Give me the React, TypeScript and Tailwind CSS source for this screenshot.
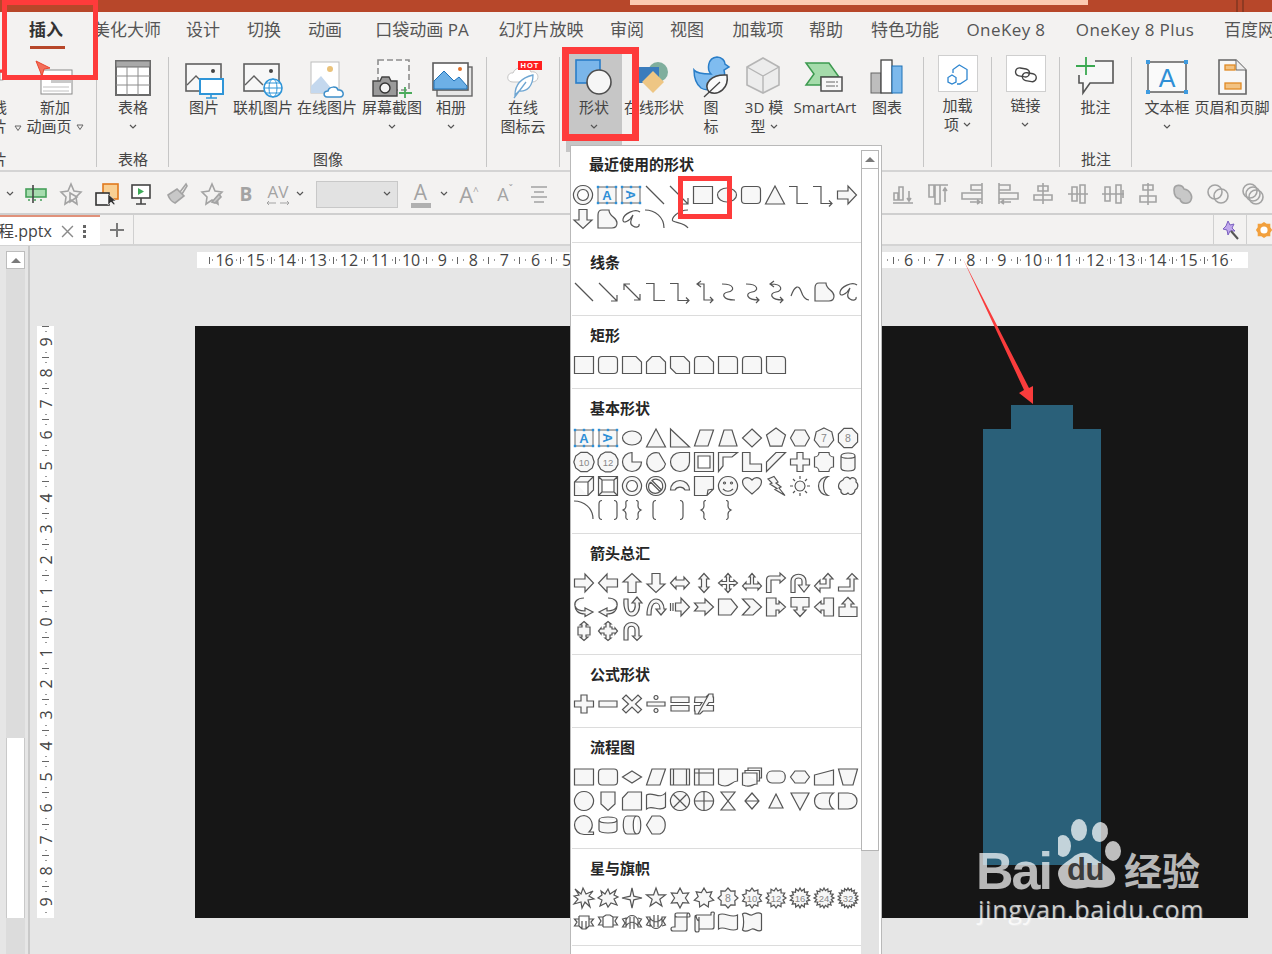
import { ReactNode } from "react";

const polar = (cx: number, cy: number, r: number, a: number) =>
  `${(cx + r * Math.cos((a * Math.PI) / 180)).toFixed(1)} ${(cy + r * Math.sin((a * Math.PI) / 180)).toFixed(1)}`;

const poly = (n: number, r = 9.5, rot = -90) => {
  const pts = [];
  for (let i = 0; i < n; i++) pts.push(polar(10, 10, r, rot + (i * 360) / n));
  return "M" + pts.join("L") + "Z";
};

const star = (n: number, r2: number, r1 = 10) => {
  const pts = [];
  for (let i = 0; i < n * 2; i++) pts.push(polar(10, 10, i % 2 ? r2 : r1, -90 + (i * 180) / n));
  return "M" + pts.join("L") + "Z";
};

const paths: Record<string, string> = {
  ring: "M10 .5a9.5 9.5 0 1 0 .01 0ZM10 4.5a5.5 5.5 0 1 0 .01 0Z",
  line: "M1 1L19 19",
  arrowLine: "M1 1L19 19M13 19h6v-6",
  dblArrow: "M2 2L18 18M2 8V2h6M12 18h6v-6",
  elbow: "M0 1.5H8V18.5H19",
  elbowArrow: "M0 1.5H8V18.5H19M16 15.5l3 3-3 3",
  elbowDbl: "M4 2H10V18H19M7 -1L3 2l4 3M16 15l3 3-3 3",
  curved: "M4 2C17 2 17 9 10 10S4 18 17 18",
  curvedArrow: "M4 2C17 2 17 9 10 10S4 18 17 18M14 15l3 3-3 3",
  curvedDbl: "M5 2C17 2 17 9 10 10S4 18 17 18M8 -1L4 2l4 3M14 15l3 3-3 3",
  curve: "M1 14C5 3 9 3 11 9S15 18 19 18",
  free: "M1 19V6Q1 1 5 1H12C12 8 20 8 20 14Q20 19 15 19Z",
  scribble: "M19 3C14 -1 3 5 2 10C1 16 9 12 12 6C10 11 8 15 12 17C15 19 19 18 18 15",
  arcLine: "M0 1C10 1 19 8 19 19",
  arcLine2: "M19 1C9 1 1 10 4 12C8 14 16 14 19 19",
  rect: "M.5 1.5H19.500V18.500H.5Z",
  roundRect: "M4 1.5H16Q19.500 1.500 19.500 5V15Q19.500 18.500 16 18.500H4Q.5 18.500 .5 15V5Q.5 1.500 4 1.500Z",
  snip1: "M.5 1.5H14L19.500 7V18.500H.5Z",
  snip2: "M6 1.5H14L19.500 7V18.500H.5V7Z",
  snipDiag: "M.5 1.5H14L19.500 7V18.500H6L.5 13Z",
  snipRound: "M4 1.5H14L19.500 7V18.500H.5V5Q.5 1.500 4 1.500Z",
  round1: "M.5 1.5H16Q19.500 1.500 19.500 5V18.500H.5Z",
  round2: "M4 1.5H16Q19.500 1.500 19.500 5V18.500H.5V5Q.5 1.500 4 1.500Z",
  roundDiag: "M.5 1.5H16Q19.500 1.500 19.500 5V18.500H4Q.5 18.500 .5 15Z",
  ellipse: "M10 3C15 3 19.500 6 19.500 10S15 17 10 17 .5 14 .5 10 5 3 10 3Z",
  tri: "M10 1L19.500 19H.5Z",
  rtTri: "M.5 1L19.500 19H.5Z",
  para: "M6 2H19.500L14 18H.5Z",
  trap: "M6 2H14L19 18H1Z",
  diamond: "M10 1L19.500 10 10 19 .5 10Z",
  penta: poly(5, 10),
  hexa: "M5 2H15L19.500 10 15 18H5L.5 10Z",
  hepta: poly(7, 10),
  octa: poly(8, 10.4, -67.5),
  deca: poly(10, 10.2, -72),
  dodeca: poly(12, 10.2, -75),
  pie: "M10 10V.5A9.5 9.5 0 1 0 19.500 10Z",
  chord: "M13 1A9.500 9.500 0 1 0 19.500 12Z",
  tear: "M10 .5A9.500 9.500 0 1 0 19.500 10V.5Z",
  frame: "M.5.5H19.500V19.500H.5ZM4 4V16H16V4Z",
  halfFrame: "M.5.5H19.500L14 5H5V14L.5 19.500Z",
  lShape: "M.5.5H8V12H19.500V19.500H.5Z",
  stripe: "M.5 19.500V10L10 .5H19.500Z",
  plus: "M7 .5H13V7H19.500V13H13V19.500H7V13H.5V7H7Z",
  plaque: "M5 .5H15A4.500 4.500 0 0 0 19.500 5V15A4.500 4.500 0 0 0 15 19.500H5A4.500 4.500 0 0 0 .5 15V5A4.500 4.500 0 0 0 5 .5Z",
  can: "M3 4C3 0 17 0 17 4V16C17 20 3 20 3 16ZM3 4C3 7 17 7 17 4",
  cube: "M.5 6L6 .5H19.500V14L14 19.500H.5ZM.5 6H14V19.500M14 6L19.500 .5",
  bevel: "M.5.5H19.500V19.500H.5ZM4 4H16V16H4ZM.5.5L4 4M19.500 .5L16 4M.5 19.500L4 16M19.500 19.500L16 16",
  donut: "M10 .5a9.500 9.500 0 1 0 .01 0ZM10 4.500a5.500 5.500 0 1 0 .01 0Z",
  noSym: "M10 .5a9.500 9.500 0 1 0 .01 0ZM4.500 6L14 15.500A6 6 0 0 0 6 4.500L15.500 14M4.500 6A6 6 0 0 0 14 15.500",
  arch: "M.5 14A9.500 9.500 0 0 1 19.500 14L15 14A5.500 5 0 0 0 5 14Z",
  fold: "M.5.5H19.500V13L13 19.500H.5ZM13 19.500L14 14 19.500 13",
  smile: "M10 .5a9.500 9.500 0 1 0 .01 0ZM6.500 6a1 1 0 1 0 .01 0ZM13.500 6a1 1 0 1 0 .01 0ZM5 13C8 16 12 16 15 13",
  heart: "M10 18C4 13 .5 10 .5 6 .5 2 6 -.5 10 4 14 -.5 19.500 2 19.500 6 19.500 10 16 13 10 18Z",
  bolt: "M2 3L8 .5 12 6 10 7 15 11 13 12 19 19.500 9 13.500 11 12.500 4 8 6 7Z",
  sun: "M10 5a5 5 0 1 0 .01 0ZM10 0V3M10 17V20M0 10H3M17 10H20M3 3L5 5M15 15L17 17M17 3L15 5M5 15L3 17",
  moon: "M14 .5A9.500 9.500 0 1 0 14 19.500C8 16 8 4 14 .5Z",
  cloud: "M5 4C6 1 10 0 12 3 15 0 19 3 18 6 21 8 20 13 17 14 17 18 12 20 10 17 7 20 2 18 3 14 -1 12 0 6 5 4Z",
  arc: "M0 1C10 1 19 8 19 19",
  brackets: "M4 .5Q1 .5 1 4V16Q1 19.500 4 19.500M16 .5Q19 .5 19 4V16Q19 19.500 16 19.500",
  braces: "M6 .5C3 .5 4 3 4 6S3 9 1 10C3 11 4 12 4 14S3 19.500 6 19.500M14 .5C17 .5 16 3 16 6S17 9 19 10C17 11 16 12 16 14S17 19.500 14 19.500",
  lBr: "M10 .5Q7 .5 7 4V16Q7 19.500 10 19.500",
  rBr: "M10 .5Q13 .5 13 4V16Q13 19.500 10 19.500",
  lBc: "M12 .5C9 .5 10 3 10 6S9 9 7 10C9 11 10 12 10 14S9 19.500 12 19.500",
  rBc: "M8 .5C11 .5 10 3 10 6S11 9 13 10C11 11 10 12 10 14S11 19.500 8 19.500",
  aRight: "M.5 6H11V1L19.500 10 11 19V14H.5Z",
  aLeft: "M19.500 6H9V1L.5 10 9 19V14H19.500Z",
  aUp: "M6 19.500V9H1L10 .5 19 9H14V19.500Z",
  aDown: "M6 .5V11H1L10 19.500 19 11H14V.5Z",
  aLR: "M.5 10L6 4V7H14V4L19.500 10 14 16V13H6V16Z",
  aUD: "M10 .5L15 6H12.500V14H15L10 19.500 5 14H7.500V6H5Z",
  aQuad: "M10 .5L13 4H11.500V8.500H16V7L19.500 10 16 13V11.500H11.500V16H13L10 19.500 7 16H8.500V11.500H4V13L.5 10 4 7V8.500H8.500V4H7Z",
  aLRU: "M10 .5L13 4H11.500V11H16V9L19.500 13 16 17V15H4V17L.5 13 4 9V11H8.500V4H7Z",
  aBent: "M.5 19.500V7Q.5 3 4 3H14V0L19.500 5 14 10V7H5V19.500Z",
  aU: "M1 19.500V8C1 -1 16 -1 16 8V12H19.500L14 19 8.500 12H12V8C12 4 5 4 5 8V19.500Z",
  aLU: "M14 .5L19 6H16V15H6V19L.5 13 6 7V11H12V6H9Z",
  aBentUp: "M.5 14H12V6H9L14 .5 19.500 6H16V18H.5Z",
  aCR: "M10 1C3 1 0 5 1 9 2 12 6 14 11 14V11L19 15 11 19.500V17C4 17 1 13 1 9",
  aCL: "M10 1C17 1 20 5 19 9 18 12 14 14 9 14V11L1 15 9 19.500V17C16 17 19 13 19 9",
  aCU: "M2 2C1 12 5 19 10 19S19 12 17 6H20L15 0 10 6H13C14 11 12 15 9 15S6 10 6 2Z",
  aCD: "M1 18C1 8 5 2 10 2S18 7 18 12H20L15 18 10 12H14C14 8 12 6 10 6S5 8 5 18Z",
  aStriped: "M.5 6V14M3 6V14M5.500 6H11V1L19.500 10 11 19V14H5.500Z",
  aNotch: "M.5 6H11V2L19.500 10 11 18V14H.5L4 10Z",
  home: "M.5 2H13L19.500 10 13 18H.5Z",
  chevron: "M.5 2H11L19.500 10 11 18H.5L8 10Z",
  cRight: "M.5 1H10V7H13V4L19.500 10 13 16V13H10V19H.5Z",
  cDown: "M1 .5H19V10H13V13H16L10 19.500 4 13H7V10H1Z",
  cLeft: "M19.500 1H10V7H7V4L.5 10 7 16V13H10V19H19.500Z",
  cUp: "M1 19.500H19V10H13V7H16L10 .5 4 7H7V10H1Z",
  cUD: "M10 .5L14 4H12V6H16V14H12V16H14L10 19.500 6 16H8V14H4V6H8V4H6Z",
  cQuad: "M10 .5L13 3H12V6H14V8H17V7L19.500 10 17 13V12H14V14H12V17H13L10 19.500 7 17H8V14H6V12H3V13L.5 10 3 7V8H6V6H8V3H7Z",
  aCirc: "M2 19V9C2 -1 17 -1 17 9V15H19.500L15 19.500 10.500 15H13V9C13 4 6 4 6 9V19Z",
  eqPlus: "M7 1H13V7H19.500V13H13V19H7V13H.5V7H7Z",
  eqMinus: "M1 7H19V13H1Z",
  eqMul: "M4 1L10 7 16 1 19.500 4.500 13.500 10 19.500 15.500 16 19 10 13 4 19 .5 15.500 6.500 10 .5 4.500Z",
  eqDiv: "M1 8H19V12H1ZM10 1.500a2 2 0 1 0 .01 0ZM10 14.500a2 2 0 1 0 .01 0Z",
  eqEq: "M1 3H19V8.500H1ZM1 11.500H19V17H1Z",
  eqNe: "M1 3H12L15 0H19V3H19.500V8.500H15L13 11.500H19.500V17H9L6 20H1V17H.5V11.500H6L8 8.500H.5ZM15 0L4 20",
  fProc: "M.5 2H19.500V18H.5Z",
  fAlt: "M4 2H16Q19.500 2 19.500 5.500V14.500Q19.500 18 16 18H4Q.5 18 .5 14.500V5.500Q.5 2 4 2Z",
  fDec: "M10 4L19.500 10 10 16 .5 10Z",
  fData: "M6 2H19.500L14 18H.5Z",
  fPre: "M.5 2H19.500V18H.5ZM3.500 2V18M16.500 2V18",
  fInt: "M.5 2H19.500V18H.5ZM.5 6H19.500M5 2V18",
  fDoc: "M.5 2H19.500V14C14 14 13 19 7 19 4 19 2 18 .5 17Z",
  fMulti: "M.5 6H15V17C11 17 9 20 5 19 3 19 2 18 .5 18ZM3 6V3.500H17.500V14H15M6 3.500V1H19.500V11H17.500",
  fTerm: "M6 4H14C21 4 21 16 14 16H6C-1 16 -1 4 6 4Z",
  fPrep: "M5 4H15L19.500 10 15 16H5L.5 10Z",
  fManI: "M.5 8L19.500 3V18H.5Z",
  fManO: "M.5 2H19.500L15 18H5Z",
  fConn: "M10 .5a9.500 9.500 0 1 0 .01 0Z",
  fOff: "M3 1H17V13L10 19.500 3 13Z",
  fCard: "M6 1H19.500V19H.5V7Z",
  fTape: "M.5 4C6 0 14 9 19.500 2V16C14 22 6 13 .5 18Z",
  fSum: "M10 .5a9.500 9.500 0 1 0 .01 0ZM3.500 3.500L16.500 16.500M16.500 3.500L3.500 16.500",
  fOr: "M10 .5a9.500 9.500 0 1 0 .01 0ZM10 .5V19.500M.5 10H19.500",
  fColl: "M3 1H17L3 19H17Z",
  fSort: "M10 2L17 10 10 18 3 10ZM3 10H17",
  fExt: "M10 3L17 17H3Z",
  fMerge: "M1 2H19L10 19Z",
  fStored: "M19.500 2H8C-2 2 -2 18 8 18H19.500C14 14 14 6 19.500 2Z",
  fDelay: "M.5 2H10C22 2 22 18 10 18H.5Z",
  fSeq: "M10 .5A9.500 9.500 0 1 0 10 19.500H19.500V17H15A9.500 9.500 0 0 0 10 .5Z",
  fDisk: "M1 5C1 1 19 1 19 5V15C19 19 1 19 1 15ZM1 5C1 9 19 9 19 5",
  fDrum: "M5 1H15C20 1 20 19 15 19H5C0 19 0 1 5 1ZM15 1C10 1 10 19 15 19",
  fDisp: "M6 1H14C21 4 21 16 14 19H6L.5 10Z",
  exp1: "M1 1L7 6 9 0 12 6 19 3 15 8 20 11 14 12 16 19 11 14 8 20 7 14 0 16 4 11 0 8 5 7Z",
  exp2: "M3 3L7 6 10 1 12 6 18 2 16 7 20 9 16 11 19 17 13 15 10 19 8 15 2 18 4 12 0 10 4 7Z",
  s4: star(4, 2.5),
  s5: star(5, 4),
  s6: star(6, 5.4),
  s7: star(7, 6),
  s8: star(8, 7.4),
  s10: star(10, 7.2),
  s12: star(12, 7.2),
  s16: star(14, 7.2),
  s24: star(16, 7.4),
  s32: star(18, 7.6),
  rUp: "M5 4H15V14H19.500L17 10 19.500 7H15M5 7H.5L3 10 .5 14H5M5 4V14M15 4V14M5 14L8 17H12L15 14M8 9V17M12 9V17",
  rDn: "M5 15H15V5H19.500L17 9 19.500 13H15M5 13H.5L3 9 .5 5H5M5 15V5M15 15V5M5 5L8 3H12L15 5",
  rcUp: "M4 8C7 2 13 2 16 8V15H19.500L17 11 19.500 7 16 6M4 6L.5 7 3 11 .5 15H4ZM8 5V17M12 5V17M4 14C7 9 13 9 16 14",
  rcDn: "M4 12C7 18 13 18 16 12V5H19.500L17 9 19.500 13 16 14M4 14L.5 13 3 9 .5 5H4ZM8 15V3M12 15V3M4 6C7 11 13 11 16 6",
  scrollV: "M5 3Q5 1 7 1H19Q17 1 17 3V17Q17 19 15 19H3Q1 19 1 17Q1 15 3 15H5ZM5 3Q5 5 7 5H19Q21 5 19 1",
  scrollH: "M1 5Q1 3 3 3H17V1Q17 0 19 0T20 3V15Q20 17 18 17H5V19Q5 20 3 20T1 18ZM5 5V17M3 3Q1 3 3 7T5 5",
  wave: "M.5 3C6 -1 13 7 19.500 3V17C13 21 6 13 .5 17Z",
  wave2: "M.5 2C4 -1 7 4 10 3S16 -1 19.500 2V18C16 21 13 16 10 17S4 21 .5 18C2 14 2 6 .5 2Z",
};

const open = new Set(["line", "arrowLine", "dblArrow", "elbow", "elbowArrow", "elbowDbl", "curved", "curvedArrow", "curvedDbl", "curve", "scribble", "arcLine", "arcLine2", "arc", "brackets", "braces", "lBr", "rBr", "lBc", "rBc", "fSort"]);

const labels: Record<string, string> = { hepta: "7", octa: "8", deca: "10", dodeca: "12", s8: "8", s10: "10", s12: "12", s16: "16", s24: "24", s32: "32" };

const Shape = ({ name }: { name: string }) => {
  if (name === "tb" || name === "tbv") {
    const handles = [[1, 2], [10, 2], [19, 2], [1, 18], [10, 18], [19, 18]];
    return (
      <svg viewBox="0 0 20 20" className="w-5 h-5 overflow-visible">
        <rect x="1" y="2" width="18" height="16" fill="#f7f7f7" stroke="#666" />
        {handles.map(([x, y]) => (
          <rect key={`${x}-${y}`} x={x - 1.2} y={y - 1.2} width="2.4" height="2.4" fill="#2f8fd6" />
        ))}
        <text x="10" y="15" fontSize="13" fontWeight="700" textAnchor="middle" fill="#2f8fd6" transform={name === "tbv" ? "rotate(90 10 10)" : undefined} fontFamily="Liberation Sans">
          A
        </text>
      </svg>
    );
  }
  const isOpen = open.has(name);
  return (
    <svg viewBox="0 0 20 20" className="w-5 h-5 overflow-visible">
      <path d={paths[name]} fill={isOpen ? "none" : "#f7f7f7"} fillRule="evenodd" stroke="#555" strokeWidth="1.2" />
      {labels[name] && (
        <text x="10" y="13.5" fontSize={labels[name].length > 1 ? "9.5" : "10.5"} textAnchor="middle" fill="#888" fontFamily="Liberation Sans">
          {labels[name]}
        </text>
      )}
    </svg>
  );
};

const sections: { title: string; rows: string[][] }[] = [
  {
    title: "线条",
    rows: [["line", "arrowLine", "dblArrow", "elbow", "elbowArrow", "elbowDbl", "curved", "curvedArrow", "curvedDbl", "curve", "free", "scribble"]],
  },
  {
    title: "矩形",
    rows: [["rect", "roundRect", "snip1", "snip2", "snipDiag", "snipRound", "round1", "round2", "roundDiag"]],
  },
  {
    title: "基本形状",
    rows: [
      ["tb", "tbv", "ellipse", "tri", "rtTri", "para", "trap", "diamond", "penta", "hexa", "hepta", "octa"],
      ["deca", "dodeca", "pie", "chord", "tear", "frame", "halfFrame", "lShape", "stripe", "plus", "plaque", "can"],
      ["cube", "bevel", "donut", "noSym", "arch", "fold", "smile", "heart", "bolt", "sun", "moon", "cloud"],
      ["arc", "brackets", "braces", "lBr", "rBr", "lBc", "rBc"],
    ],
  },
  {
    title: "箭头总汇",
    rows: [
      ["aRight", "aLeft", "aUp", "aDown", "aLR", "aUD", "aQuad", "aLRU", "aBent", "aU", "aLU", "aBentUp"],
      ["aCR", "aCL", "aCU", "aCD", "aStriped", "aNotch", "home", "chevron", "cRight", "cDown", "cLeft", "cUp"],
      ["cUD", "cQuad", "aCirc"],
    ],
  },
  {
    title: "公式形状",
    rows: [["eqPlus", "eqMinus", "eqMul", "eqDiv", "eqEq", "eqNe"]],
  },
  {
    title: "流程图",
    rows: [
      ["fProc", "fAlt", "fDec", "fData", "fPre", "fInt", "fDoc", "fMulti", "fTerm", "fPrep", "fManI", "fManO"],
      ["fConn", "fOff", "fCard", "fTape", "fSum", "fOr", "fColl", "fSort", "fExt", "fMerge", "fStored", "fDelay"],
      ["fSeq", "fDisk", "fDrum", "fDisp"],
    ],
  },
  {
    title: "星与旗帜",
    rows: [
      ["exp1", "exp2", "s4", "s5", "s6", "s7", "s8", "s10", "s12", "s16", "s24", "s32"],
      ["rUp", "rDn", "rcUp", "rcDn", "scrollV", "scrollH", "wave", "wave2"],
    ],
  },
];

const recent = [
  ["ring", "tb", "tbv", "line", "arrowLine", "rect", "ellipse", "roundRect", "tri", "elbow", "elbowArrow", "aRight"],
  ["aDown", "free", "scribble", "arcLine", "arcLine2"],
];

const ShapeRows = ({ rows }: { rows: string[][] }) => (
  <div className="flex flex-col">
    {rows.map((row, i) => (
      <div key={i} className="flex h-6">
        {row.map((name, j) => (
          <div key={j} className="w-6 h-6 flex items-center justify-center">
            <Shape name={name} />
          </div>
        ))}
      </div>
    ))}
  </div>
);

const MenuTitle = ({ children }: { children: ReactNode }) => (
  <div className="h-5 pl-[18px] text-[15px] leading-5 font-bold text-[#262626]">{children}</div>
);

const ShapesMenu = () => (
  <div className="absolute left-[570px] top-[145px] w-[312px] bottom-0 bg-white border border-b-0 border-[#b9b9b9] flex overflow-hidden">
    <div className="w-[291px]">
      <div className="pt-2 pb-[11px]">
        <MenuTitle>最近使用的形状</MenuTitle>
        <div className="mt-[9px]">
          <ShapeRows rows={recent} />
        </div>
      </div>
      {sections.map((s) => (
        <div key={s.title} className="ml-px border-t border-[#dcdcdc] pt-[9px] pb-[11px]">
          <MenuTitle>{s.title}</MenuTitle>
          <div className="mt-2">
            <ShapeRows rows={s.rows} />
          </div>
        </div>
      ))}
      <div className="ml-px border-t border-[#dcdcdc]" />
    </div>
    <div className="w-[18px] mt-1 flex flex-col">
      <div className="h-[19px] bg-white border border-[#b5b5b5] flex items-center justify-center">
        <div className="w-0 h-0 border-x-[5px] border-x-transparent border-b-[5px] border-b-[#7a7a7a]" />
      </div>
      <div className="h-[682px] bg-white border-x border-b border-[#b5b5b5]" />
      <div className="flex-1 bg-[#e3e3e3]" />
    </div>
    <div className="w-[2px]" />
  </div>
);

const tabs: [string, string][] = [
  ["插入", "w-[60px] ml-4 font-bold text-[#333]"],
  ["美化大师", "w-[102px]"],
  ["设计", "w-[50px]"],
  ["切换", "w-[72px]"],
  ["动画", "w-[50px]"],
  ["口袋动画 PA", "w-[144px]"],
  ["幻灯片放映", "w-[94px]"],
  ["审阅", "w-[78px]"],
  ["视图", "w-[42px]"],
  ["加载项", "w-[100px]"],
  ["帮助", "w-[36px]"],
  ["特色功能", "w-[122px]"],
  ["OneKey 8", "w-[80px] tracking-[.4px]"],
  ["OneKey 8 Plus", "w-[178px] tracking-[.4px]"],
];

const Chevron = ({ className = "" }: { className?: string }) => (
  <svg viewBox="0 0 8 6" className={`w-2 h-1.5 ${className}`}>
    <path d="M1 1l3 3 3-3" fill="none" stroke="#555" strokeWidth="1.2" />
  </svg>
);

const Tri = ({ className = "ml-1" }: { className?: string }) => (
  <svg viewBox="0 0 8 6" className={`w-2 h-1.5 inline-block ${className}`}>
    <path d="M1 1h6L4 5.500Z" fill="none" stroke="#666" />
  </svg>
);

const Icon = ({ children }: { children: ReactNode }) => (
  <svg viewBox="0 0 48 48" className="w-12 h-12 shrink-0 overflow-visible">
    {children}
  </svg>
);

const SlideIco = () => (
  <Icon>
    <rect x="10" y="20" width="31" height="24" fill="#fff" stroke="#8a8a8a" />
    <rect x="20" y="26" width="20" height="7" fill="#c9c9c9" />
    <path d="M12 37h26M12 41h26" stroke="#c0c0c0" />
    <path d="M5 11l14 7-6 1-2 7Z" fill="#f36f5a" stroke="#e9452f" />
  </Icon>
);

const TableIco = () => (
  <Icon>
    <rect x="7" y="11" width="34" height="34" fill="#fff" stroke="#6b6b6b" strokeWidth="2" />
    <rect x="7" y="11" width="34" height="6" fill="#a9a9a9" stroke="#6b6b6b" />
    <path d="M18 17V45M29 17V45M7 26H41M7 35H41" stroke="#8c8c8c" />
  </Icon>
);

const Mountain = ({ x = 0, y = 0 }: { x?: number; y?: number }) => (
  <g transform={`translate(${x} ${y})`}>
    <rect x="0" y="0" width="35" height="27" fill="#f7f7f7" stroke="#5f5f5f" strokeWidth="1.6" />
    <path d="M1 21L10 12 19 21" fill="none" stroke="#5f5f5f" strokeWidth="1.4" />
    <circle cx="27" cy="7" r="2" fill="#444" />
  </g>
);

const PicIco = () => (
  <Icon>
    <Mountain x={6} y={14} />
    <rect x="20" y="29" width="23" height="15" fill="#fff" stroke="#2e95d8" strokeWidth="2" />
    <path d="M31 44V48M26 48H37" stroke="#2e95d8" strokeWidth="1.6" />
  </Icon>
);

const OnlinePicIco = () => (
  <Icon>
    <Mountain x={5} y={14} />
    <circle cx="34" cy="38" r="9" fill="#fff" stroke="#2e95d8" strokeWidth="1.6" />
    <ellipse cx="34" cy="38" rx="4" ry="9" fill="none" stroke="#2e95d8" />
    <path d="M25 38H43M27 33H41M27 43H41" stroke="#2e95d8" />
  </Icon>
);

const CloudPicIco = () => (
  <Icon>
    <rect x="8" y="12" width="28" height="31" fill="#fff" stroke="#bdbdbd" />
    <circle cx="27" cy="19" r="3" fill="#eac27a" />
    <path d="M8 43V36L18 26 28 38 33 43Z" fill="#c4d8ee" />
    <path d="M24 47C20 47 20 41 25 41 26 36 34 36 35 40 41 39 42 47 37 47Z" fill="#fff" stroke="#3d8fca" strokeWidth="1.5" />
  </Icon>
);

const ShotIco = () => (
  <Icon>
    <rect x="10" y="10" width="31" height="30" fill="#f7f7f7" stroke="#8d8d8d" strokeDasharray="6 3" strokeWidth="1.6" />
    <path d="M5 31H12L14 27H21L23 31H29V46H5Z" fill="#9a9a9a" stroke="#444" strokeWidth="1.4" />
    <circle cx="17" cy="38" r="5" fill="#f4f4f4" stroke="#333" strokeWidth="1.4" />
    <path d="M37 37V48M31 43H44" stroke="#4bab5c" strokeWidth="1.8" />
  </Icon>
);

const AlbumIco = () => (
  <Icon>
    <rect x="10" y="17" width="35" height="29" fill="#e6e6e6" stroke="#666" strokeWidth="1.4" />
    <rect x="6" y="13" width="35" height="27" fill="#fff" stroke="#5c5c5c" strokeWidth="1.6" />
    <path d="M7 39V31L17 21 27 31 32 27 40 36V39Z" fill="#6db0e6" stroke="#1f72b8" />
    <circle cx="33" cy="19" r="2" fill="#e2722a" />
  </Icon>
);

const CloudIconIco = () => (
  <Icon>
    <path d="M14 32C6 32 8 22 14 23 16 16 30 15 32 22 40 20 42 32 33 32Z" fill="#fff" stroke="#c5c5c5" />
    <rect x="19" y="11" width="24" height="9" fill="#ff1f1f" />
    <text x="31" y="18" fontSize="7.5" fontWeight="700" textAnchor="middle" fill="#fff" letterSpacing="1" fontFamily="Liberation Sans">
      HOT
    </text>
    <path d="M16 45C16 34 22 28 34 25 34 36 28 42 20 41ZM15 48L27 32" fill="#fff" stroke="#6fa6d2" strokeWidth="1.3" />
  </Icon>
);

const ShapesIco = () => (
  <Icon>
    <rect x="6" y="10" width="24" height="23" fill="#7ab6ea" stroke="#2a7ec8" strokeWidth="1.6" />
    <circle cx="29" cy="32" r="12" fill="#f6f6f6" stroke="#4e4e4e" strokeWidth="1.6" />
  </Icon>
);

const OnlineShapesIco = () => (
  <Icon>
    <circle cx="28" cy="22" r="10" fill="#7fae9d" />
    <path d="M9 17H29V33H9Z" fill="#3b7cbc" />
    <path d="M23 21L34 32 23 43 12 32Z" fill="#eec684" />
  </Icon>
);

const DuckIco = () => (
  <Icon>
    <path d="M7 20C10 24 20 24 24 24C20 20 20 8 30 7C35 7 38 11 38 14L42 17 37 20C38 24 38 28 36 30C34 38 20 42 14 38C9 34 7 26 7 20Z" fill="#7fbcf0" stroke="#2a7ec8" strokeWidth="1.5" />
    <path d="M22 42C16 34 24 24 40 25 42 38 32 46 22 42Z" fill="#fafafa" stroke="#444" strokeWidth="1.5" />
    <path d="M17 47L33 32" stroke="#444" strokeWidth="1.3" />
  </Icon>
);

const CubeIco = () => (
  <Icon>
    <path d="M23 8L39 17V35L23 43 7 35V17Z" fill="#ececec" stroke="#b5b5b5" strokeWidth="1.6" />
    <path d="M7 17L23 26 39 17M23 26V43" fill="none" stroke="#b5b5b5" strokeWidth="1.4" />
  </Icon>
);

const SmartIco = () => (
  <Icon>
    <path d="M5 13H28L38 27H20V35H5L13 24Z" fill="#a5dcab" stroke="#3d9a50" strokeWidth="1.5" />
    <rect x="20" y="27" width="21" height="14" fill="#f7f7f7" stroke="#4e4e4e" strokeWidth="1.5" />
    <path d="M25 32H37M25 36H37" stroke="#666" strokeDasharray="9 1" />
  </Icon>
);

const ChartIco = () => (
  <Icon>
    <rect x="8" y="23" width="10" height="20" fill="#bdbdbd" stroke="#666" />
    <rect x="18" y="10" width="11" height="33" fill="#fff" stroke="#444" strokeWidth="1.3" />
    <rect x="29" y="16" width="10" height="27" fill="#7cb9ec" stroke="#1f72b8" />
  </Icon>
);

const AddinIco = () => (
  <div className="w-10 h-[37px] mt-[5px] bg-white border border-[#cfcfcf] flex items-center justify-center">
    <svg viewBox="0 0 24 24" className="w-6 h-6">
      <path d="M7 11V7.500L13.300 3 21 7.500V17.500L14 22H11" fill="none" stroke="#2e86d0" strokeWidth="1.3" />
      <path d="M6 13L10 15.500V20L6 22 2 20V15.500Z" fill="none" stroke="#2e86d0" strokeWidth="1.3" />
    </svg>
  </div>
);

const LinkIco = () => (
  <div className="w-10 h-[37px] mt-[5px] bg-white border border-[#cfcfcf] flex items-center justify-center">
    <svg viewBox="0 0 24 24" className="w-6 h-6">
      <rect x="1.500" y="6.500" width="14" height="8" rx="4" transform="rotate(10 8.700 10.500)" fill="none" stroke="#444" strokeWidth="1.4" />
      <rect x="8.300" y="11.200" width="14" height="8" rx="4" transform="rotate(10 15.300 15.200)" fill="none" stroke="#444" strokeWidth="1.4" />
    </svg>
  </div>
);

const CommentIco = () => (
  <Icon>
    <path d="M23 11H41V33H18L11 43V33H7V25" fill="#f7f7f7" stroke="#555" strokeWidth="1.6" />
    <path d="M14 7V25M4 16H23" stroke="#3aa850" strokeWidth="1.8" />
  </Icon>
);

const TextboxIco = () => (
  <Icon>
    <rect x="5" y="12" width="38" height="30" fill="#fafafa" stroke="#555" strokeWidth="1.4" />
    {[[5, 12], [43, 12], [5, 42], [43, 42]].map(([x, y]) => (
      <rect key={`${x}${y}`} x={x - 2} y={y - 2} width="4" height="4" fill="#3f9be0" />
    ))}
    <text x="24" y="37" fontSize="25" textAnchor="middle" fill="#2f8fd6" fontFamily="Liberation Sans">
      A
    </text>
  </Icon>
);

const HeaderIco = () => (
  <Icon>
    <path d="M11 10H28L38 20V44H11Z" fill="#f7f7f7" stroke="#666" strokeWidth="1.6" />
    <path d="M28 10V20H38" fill="#eee" stroke="#666" />
    <rect x="17" y="15" width="10" height="5" fill="#f2c282" stroke="#e08a25" strokeWidth="1.3" />
    <rect x="17" y="33" width="16" height="6" fill="#f2c282" stroke="#e08a25" strokeWidth="1.3" />
  </Icon>
);

const Item = ({ width, icon, lines, active = false, top }: { width: string; icon: ReactNode; lines: ReactNode[]; active?: boolean; top?: string }) => (
  <div className={`${width} shrink-0 flex flex-col items-center ${active ? "bg-[#c6c6c6] h-[102px]" : ""}`}>
    <div className="h-[48px] flex justify-center w-12">{icon}</div>
    <div className={`flex flex-col items-center whitespace-nowrap text-[15px] leading-[19px] text-[#444] ${top ?? ""}`}>
      {lines.map((l, i) => (
        <div key={i} className="h-[19px] flex items-center">
          {l}
        </div>
      ))}
    </div>
  </div>
);

const Group = ({ width, label, children, pad = "" }: { width: string; label?: string; children: ReactNode; pad?: string }) => (
  <div className={`${width} shrink-0 h-full flex flex-col relative`}>
    <div className={`flex ${pad}`}>{children}</div>
    {label && <div className="absolute left-0 right-0 top-[99px] text-center text-[15px] leading-5 text-[#444]">{label}</div>}
    <div className="absolute right-0 top-[7px] h-[110px] w-px bg-[#c6c6c6]" />
  </div>
);

const Ribbon = () => (
  <div className="h-[124px] flex pt-0.5 border-b-2 border-[#d4d4d4] bg-[#f3f2f1] overflow-hidden">
    <Group width="w-[97px]" pad="-ml-[8px]">
      <div className="w-[30px] shrink-0 flex flex-col items-start pt-[48px] text-[15px] leading-[19px] text-[#444] whitespace-nowrap relative">
        <div>线</div>
        <div>
          片
          <Tri className="ml-[7px]" />
        </div>
        <div className="absolute left-0 top-[99px] leading-5 text-left">片</div>
        <svg viewBox="0 0 16 16" className="absolute left-[8px] top-[12px] w-3 h-6">
          <rect x="0" y="6" width="4" height="10" fill="#fff" stroke="#888" />
          <rect x="0" y="2" width="6" height="4" fill="#f33" />
        </svg>
      </div>
      <Item
        width="w-[66px]"
        icon={<SlideIco />}
        lines={[
          "新加",
          <>
            动画页
            <Tri />
          </>,
        ]}
      />
    </Group>
    <Group width="w-[72px]" label="表格">
      <Item width="w-[72px]" icon={<TableIco />} lines={["表格", <Chevron />]} />
    </Group>
    <Group width="w-[318px]" label="图像" pad="pl-[5px]">
      <Item width="w-[60px]" icon={<PicIco />} lines={["图片"]} />
      <Item width="w-[58px]" icon={<OnlinePicIco />} lines={["联机图片"]} />
      <Item width="w-[70px]" icon={<CloudPicIco />} lines={["在线图片"]} />
      <Item width="w-[60px]" icon={<ShotIco />} lines={["屏幕截图", <Chevron />]} />
      <Item width="w-[58px]" icon={<AlbumIco />} lines={["相册", <Chevron />]} />
    </Group>
    <Group width="w-[73px]">
      <Item width="w-[72px]" icon={<CloudIconIco />} lines={["在线", "图标云"]} />
    </Group>
    <Group width="w-[364px]" pad="pl-[6px]">
      <Item width="w-[56px]" active icon={<ShapesIco />} lines={["形状", <Chevron />]} />
      <Item width="w-[64px]" icon={<OnlineShapesIco />} lines={["在线形状"]} />
      <Item width="w-[50px]" icon={<DuckIco />} lines={["图", "标"]} />
      <Item
        width="w-[56px]"
        icon={<CubeIco />}
        lines={[
          "3D 模",
          <>
            型<Chevron className="ml-1" />
          </>,
        ]}
      />
      <Item width="w-[66px]" icon={<SmartIco />} lines={["SmartArt"]} />
      <Item width="w-[58px]" icon={<ChartIco />} lines={["图表"]} />
    </Group>
    <Group width="w-[68px]">
      <Item
        width="w-[67px]"
        icon={<AddinIco />}
        top="-mt-[2px]"
        lines={[
          "加载",
          <>
            项<Chevron className="ml-1" />
          </>,
        ]}
      />
    </Group>
    <Group width="w-[68px]">
      <Item width="w-[67px]" icon={<LinkIco />} top="-mt-[2px]" lines={["链接", <Chevron />]} />
    </Group>
    <Group width="w-[72px]" label="批注">
      <Item width="w-[71px]" icon={<CommentIco />} lines={["批注"]} />
    </Group>
    <div className="flex-1 flex">
      <Item width="w-[70px]" icon={<TextboxIco />} lines={["文本框", <Chevron />]} />
      <Item width="w-[60px]" icon={<HeaderIco />} lines={["页眉和页脚"]} />
    </div>
  </div>
);

const Tool = ({ w = "w-[35px]", children }: { w?: string; children: ReactNode }) => (
  <div className={`${w} shrink-0 flex items-center justify-center`}>{children}</div>
);

const G = ({ children }: { children: ReactNode }) => (
  <svg viewBox="0 0 24 24" className="w-6 h-6 overflow-visible" fill="none" stroke="#a3a3a3" strokeWidth="1.6">
    {children}
  </svg>
);

const starPath = "M12 2L15 9 22 10 17 15 18 22 12 18 6 22 7 15 2 10 9 9Z";

const Toolbar = () => (
  <div className="h-[43px] flex items-center pt-[3px] bg-[#f3f2f1] border-b-2 border-[#cfcfcf]">
    <Tool w="w-5">
      <Chevron />
    </Tool>
    <Tool w="w-8">
      <G>
        <rect x="2" y="7" width="20" height="8" fill="#a6dcae" stroke="#46a05a" />
        <path d="M9 3V21" stroke="#444" />
        <path d="M4 18H20" stroke="#46a05a" strokeDasharray="2 4" />
      </G>
    </Tool>
    <Tool w="w-[38px]">
      <G>
        <path d={starPath} />
        <path d="M11 11V20L18 15Z" />
      </G>
    </Tool>
    <Tool w="w-[34px]">
      <G>
        <rect x="8" y="2" width="15" height="15" fill="#f8cf93" stroke="#e0791d" />
        <rect x="1" y="11" width="13" height="12" fill="#f5f5f5" stroke="#333" />
        <path d="M13 12V23L16 20 19 23 20 22 18 19H21Z" fill="#333" stroke="#fff" strokeWidth=".5" />
      </G>
    </Tool>
    <Tool w="w-[34px]">
      <G>
        <rect x="3" y="3" width="18" height="13" fill="#fff" stroke="#444" />
        <path d="M12 16V22M7 22H17" stroke="#444" />
        <path d="M9 6L15 9.500 9 13Z" fill="#3eaa58" stroke="none" />
      </G>
    </Tool>
    <Tool w="w-[37px]">
      <G>
        <path d="M3 13L12 7 19 14 10 21C7 20 4 16 3 13Z" fill="#c8c8c8" />
        <path d="M15 10L21 2 22 4 17 12" />
      </G>
    </Tool>
    <Tool w="w-[34px]">
      <G>
        <path d={starPath} />
        <path d="M12 20L19 12 21 15 15 21Z" fill="#c8c8c8" />
      </G>
    </Tool>
    <Tool w="w-[34px]">
      <span className="text-[19px] font-bold text-[#a3a3a3]">B</span>
    </Tool>
    <Tool w="w-[30px]">
      <div className="flex flex-col items-center leading-none">
        <span className="text-[17px] text-[#a3a3a3] leading-[17px]">AV</span>
        <svg viewBox="0 0 24 6" className="w-6 h-1.5">
          <path d="M1 3H10M14 3H23M3 1L1 3 3 5M21 1L23 3 21 5" fill="none" stroke="#a3a3a3" />
        </svg>
      </div>
    </Tool>
    <Tool w="w-[14px]">
      <Chevron />
    </Tool>
    <div className="ml-[9px] w-[82px] h-[27px] shrink-0 bg-[#e2e2e2] border border-[#c8c8c8] flex items-center justify-end pr-1.5">
      <Chevron />
    </div>
    <div className="ml-[3px]">
      <Tool w="w-[39px]">
        <div className="flex flex-col items-center w-5">
          <span className="text-[21px] leading-[22px] text-[#a3a3a3]">A</span>
          <div className="w-5 h-[5px] bg-[#b0b0b0]" />
        </div>
      </Tool>
    </div>
    <Tool w="w-2">
      <Chevron />
    </Tool>
    <Tool w="w-[42px]">
      <span className="text-[22px] text-[#a3a3a3] leading-none">
        A<sup className="text-[10px] -top-2">^</sup>
      </span>
    </Tool>
    <Tool w="w-[30px]">
      <span className="text-[18px] text-[#a3a3a3] leading-none">
        A<sup className="text-[10px] -top-2">ˇ</sup>
      </span>
    </Tool>
    <Tool w="w-[38px]">
      <G>
        <path d="M4 5H20M7 10H17M4 15H20M7 20H17" />
      </G>
    </Tool>
    <div className="ml-auto flex pr-0.5">
      <Tool>
        <G>
          <path d="M2 21H22M3 18V11H7V18ZM8 18V5H12V18ZM18 9V18M16 16L18 19 20 16" />
        </G>
      </Tool>
      <Tool>
        <G>
          <path d="M2 3H22M3 3V15H8V3M9 3V22H14V3M19 20V7M17 9L19 6 21 9" />
        </G>
      </Tool>
      <Tool>
        <G>
          <path d="M21 1V22M10 3H21V8H10ZM1 11H21V17H1ZM9 20H19M16 18L19 20 16 22" />
        </G>
      </Tool>
      <Tool>
        <G>
          <path d="M3 1V22M3 3H14V8H3ZM3 11H22V17H3ZM15 20H5M8 18L5 20 8 22" />
        </G>
      </Tool>
      <Tool>
        <G>
          <path d="M12 1V22M7 4H17V9H7ZM3 13H21V18H3Z" />
        </G>
      </Tool>
      <Tool>
        <G>
          <path d="M2 12H22M6 5H11V19H6ZM14 3H19V21H14Z" />
        </G>
      </Tool>
      <Tool>
        <G>
          <path d="M1 12H23M4 5H9V19H4ZM15 3H20V21H15ZM22 8V16" />
        </G>
      </Tool>
      <Tool>
        <G>
          <path d="M12 1V23M7 3H17V8H7ZM4 14H20V20H4Z" />
        </G>
      </Tool>
      <Tool>
        <G>
          <path d="M3 8C3 2 11 2 13 7 19 8 22 14 20 18 18 23 10 22 9 17 4 16 3 12 3 8Z" fill="#c8c8c8" />
        </G>
      </Tool>
      <Tool>
        <G>
          <circle cx="9" cy="10" r="7" />
          <circle cx="15" cy="14" r="7" />
        </G>
      </Tool>
      <Tool>
        <G>
          <circle cx="9" cy="9" r="7" />
          <circle cx="12" cy="12" r="7" />
          <circle cx="15" cy="15" r="7" />
        </G>
      </Tool>
    </div>
  </div>
);

const DocTabs = () => (
  <div className="h-[31px] flex bg-[#f3f2f1] border-b-2 border-[#d4d4d4]">
    <div className="w-[100px] h-[30px] bg-white border-t-2 border-[#e0917a] flex items-center text-[#444]">
      <span className="text-[16px] leading-none -ml-[2px] whitespace-nowrap">程.pptx</span>
      <svg viewBox="0 0 12 12" className="w-[13px] h-[13px] ml-[9px]">
        <path d="M1 1L11 11M11 1L1 11" stroke="#8a8a8a" strokeWidth="1.3" />
      </svg>
      <div className="ml-[9px] flex flex-col gap-[2px]">
        <div className="w-[3px] h-[3px] bg-[#666]" />
        <div className="w-[3px] h-[3px] bg-[#666]" />
        <div className="w-[3px] h-[3px] bg-[#666]" />
      </div>
    </div>
    <div className="w-[34px] border-r border-[#d0d0d0] flex items-center justify-center">
      <svg viewBox="0 0 14 14" className="w-[14px] h-[14px]">
        <path d="M7 0V14M0 7H14" stroke="#7a7a7a" strokeWidth="2" />
      </svg>
    </div>
    <div className="ml-auto w-[33px] border-l border-[#d0d0d0] flex items-center justify-center">
      <svg viewBox="0 0 20 20" className="w-5 h-5">
        <path d="M8 1L10 5 14 4 12 8 15 11 10 11 8 15 7 10 3 9 6 6Z" fill="#c0a8ec" stroke="#7a5fc0" />
        <path d="M11 11L18 19" stroke="#555" strokeWidth="2" />
      </svg>
    </div>
    <div className="w-[26px] border-l border-[#d0d0d0] flex items-center pl-2">
      <svg viewBox="0 0 20 20" className="w-[18px] h-[18px] shrink-0">
        <path d="M10 1L13 3 17 3 17 7 19 10 17 13 17 17 13 17 10 19 7 17 3 17 3 13 1 10 3 7 3 3 7 3Z" fill="#f2a03d" />
        <circle cx="10" cy="10" r="4" fill="#fff" />
      </svg>
    </div>
  </div>
);

const hNums = [16, 15, 14, 13, 12, 11, 10, 9, 8, 7, 6, 5, 4, 3, 2, 1, 0, 1, 2, 3, 4, 5, 6, 7, 8, 9, 10, 11, 12, 13, 14, 15, 16];
const vNums = [9, 8, 7, 6, 5, 4, 3, 2, 1, 0, 1, 2, 3, 4, 5, 6, 7, 8, 9];

const HRuler = () => (
  <div className="ml-[167px] mt-[6px] w-[1051px] h-4 bg-white flex pl-[11.5px] overflow-hidden">
    {hNums.map((n, i) => (
      <div key={i} className="w-[31.1px] shrink-0 h-4 flex items-center text-[16px] leading-none text-[#444]">
        <div className="w-px h-[7px] bg-[#666]" />
        <div className="flex-1 flex justify-center">
          <div className="w-px h-[2px] bg-[#999]" />
        </div>
        <span>{n}</span>
        <div className="flex-1 flex justify-center">
          <div className="w-px h-[2px] bg-[#999]" />
        </div>
      </div>
    ))}
  </div>
);

const VRuler = () => (
  <div className="w-[17px] h-[592px] bg-white flex flex-col overflow-hidden shrink-0">
    {vNums.map((n, i) => (
      <div key={i} className="h-[31.1px] shrink-0 w-[17px] flex flex-col items-center text-[16px] leading-none text-[#444]">
        <div className="h-px w-[7px] bg-[#666]" />
        <div className="flex-1 flex flex-col justify-center">
          <div className="h-px w-[2px] bg-[#999]" />
        </div>
        <span className="-rotate-90 block h-[12px] leading-[12px]">{n}</span>
        <div className="flex-1 flex flex-col justify-center">
          <div className="h-px w-[2px] bg-[#999]" />
        </div>
      </div>
    ))}
  </div>
);

const Slide = () => (
  <div className="ml-[141px] w-[1053px] h-[592px] bg-[#161616] flex flex-col items-end pt-[79px] pr-[147px]">
    <div className="w-[62px] h-6 bg-[#2a6079] mr-[28px]" />
    <div className="w-[118px] h-[436px] bg-[#2a6079]" />
  </div>
);

const Watermark = () => (
  <div className="absolute left-[978px] top-[818px] w-[240px] h-[112px] pointer-events-none">
    <svg viewBox="0 0 140 72" className="absolute left-[80px] top-0 w-[140px] h-[72px]">
      <g fill="#fff" fillOpacity=".72">
        <ellipse cx="5" cy="28" rx="8" ry="11" />
        <ellipse cx="21" cy="12" rx="8" ry="11" />
        <ellipse cx="42" cy="14" rx="8" ry="10" transform="rotate(10 42 14)" />
        <ellipse cx="55" cy="33" rx="8" ry="10" />
        <path d="M1 60C-3 50 6 46 14 40 20 34 30 32 36 40 44 46 59 52 57 62 54 72 36 70 30 69 20 72 4 72 1 60Z" />
      </g>
    </svg>
    <span className="absolute left-[-2px] top-[25px] text-[52px] leading-[56px] font-bold tracking-[-2px] text-white/70" style={{ fontFamily: "Liberation Sans, sans-serif" }}>
      Bai
    </span>
    <span className="absolute left-[89px] top-[37px] text-[31px] leading-[30px] font-bold tracking-[-.5px] text-[#2a2a2a]/90" style={{ fontFamily: "Liberation Sans, sans-serif" }}>
      du
    </span>
    <span className="absolute left-[146px] top-[30px] text-[38px] leading-[44px] font-bold text-white/70">经验</span>
    <span className="absolute left-0 top-[76px] text-[25px] leading-[30px] tracking-[.8px] text-white/75 [text-shadow:1px_1px_1px_rgba(255,255,255,.3)] whitespace-nowrap" style={{ fontFamily: "Open Sans, sans-serif" }}>
      jingyan.baidu.com
    </span>
  </div>
);

const App = () => (
  <div
    className="relative w-[1272px] h-[954px] overflow-hidden bg-[#e6e6e6] text-[#444]"
    style={{ fontFamily: "'Open Sans', 'Noto Sans CJK SC', sans-serif" }}
  >
    <div className="h-3 bg-[#b7472a] flex items-start pl-[630px]">
      <div className="w-[458px] h-[5px] bg-[#fcc9b0]" />
      <div className="ml-auto mr-7 flex gap-1">
        <div className="w-[2px] h-3 bg-[#8f3a22]" />
        <div className="w-[2px] h-3 bg-[#8f3a22]" />
      </div>
    </div>
    <div className="h-9 flex items-center bg-[#f3f2f1] text-[17px] text-[#555] whitespace-nowrap">
      {tabs.map(([label, cls]) => (
        <div key={label} className={`${cls} shrink-0 text-center relative leading-9`}>
          {label}
          {label === "插入" && <div className="absolute left-[14px] top-[34px] w-[35px] h-[3px] bg-[#b7472a]" />}
        </div>
      ))}
      <div className="shrink-0">百度网</div>
    </div>
    <Ribbon />
    <Toolbar />
    <DocTabs />
    <div className="flex h-[708px]">
      <div className="w-[30px] shrink-0 border-r-2 border-[#c9c9c9] pl-1.5 pt-[5px] flex flex-col">
        <div className="w-[19px] h-[18px] bg-white border border-[#bdbdbd] flex items-center justify-center">
          <div className="w-0 h-0 border-x-[5px] border-x-transparent border-b-[5px] border-b-[#7a7a7a]" />
        </div>
        <div className="w-[19px] h-[469px] bg-[#dcdcdc]" />
        <div className="w-[19px] h-[180px] bg-white border-x border-[#c9c9c9]" />
        <div className="w-[19px] flex-1 bg-[#dcdcdc]" />
      </div>
      <div className="flex-1 flex flex-col">
        <HRuler />
        <div className="flex mt-[58px] ml-[7px]">
          <VRuler />
          <Slide />
        </div>
      </div>
    </div>

    <ShapesMenu />

    <svg viewBox="0 0 1272 954" className="absolute inset-0 w-[1272px] h-[954px] pointer-events-none">
      <path d="M963 259L1029 388 1033 386 1033 404 1019 393 1024 390Z" fill="#f93c3c" />
    </svg>
    <Watermark />

    <div className="absolute left-[2px] top-0 w-[96px] h-[80px] border-[5px] border-[#fe3b3b]" />
    <div className="absolute left-[562px] top-[47px] w-[77px] h-[94px] border-[7px] border-[#fe3b3b]" />
    <div className="absolute left-[678px] top-[176px] w-[54px] h-[43px] border-[5px] border-[#fe3b3b]" />
  </div>
);

export default App;
